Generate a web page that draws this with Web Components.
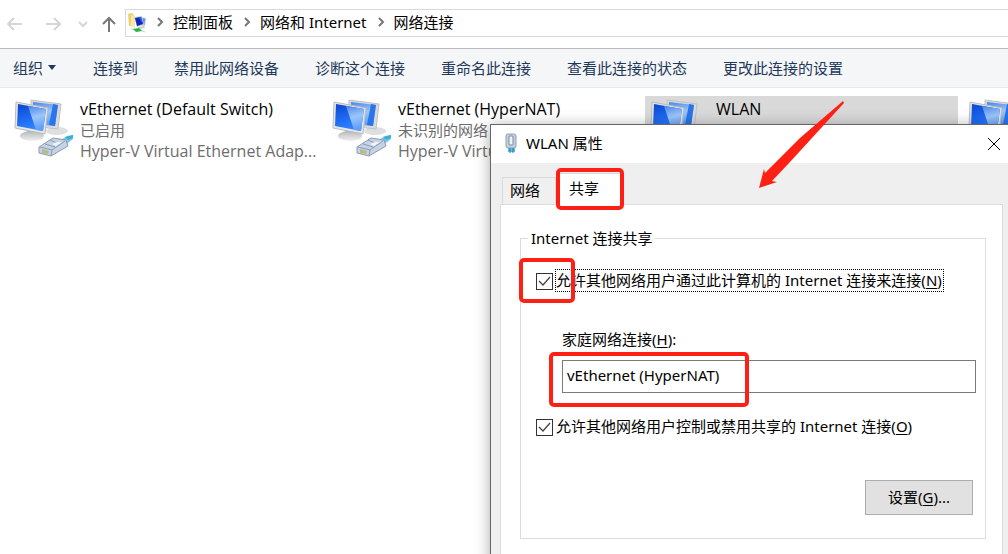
<!DOCTYPE html>
<html lang="zh-CN">
<head>
<meta charset="utf-8">
<title>网络连接</title>
<style>
html, body { margin: 0; height: 100%; }
body { background: #fff; color: #000; font: 15px/21px "Noto Sans", "Noto Sans CJK SC", sans-serif; overflow: hidden; }
</style>
</head>
<body>
<network-window></network-window>
<script>
function define(name, html) {
  const template = document.createElement('template');
  template.innerHTML = html;
  customElements.define(name, class extends HTMLElement {
    constructor() {
      super();
      this.attachShadow({ mode: 'open' }).append(template.content.cloneNode(true));
    }
  });
}

define('crumb-bar', `
<style>
:host { display: flex; align-items: center; height: 48px; border-bottom: 1px solid #b9bcbf; box-sizing: content-box; }
.nav { display: flex; width: 125px; flex: none; }
.nav button { border: 0; padding: 0; background: none; display: block; height: 28px; }
.nav svg { display: block; }
.address { flex: 1; min-width: 0; box-sizing: border-box; height: 28px; margin-bottom: 2px; border: 1px solid #d9d9d9; border-right: 0; display: flex; align-items: center; white-space: nowrap; }
a { color: #000; text-decoration: none; line-height: 20px; padding-bottom: 2px; }
.sep { flex: none; width: 27px; height: 26px; }
</style>
<div class="nav">
<button aria-label="后退"><svg width="44" height="28" fill="none" stroke="#d5d5d5" stroke-width="2"><path d="M22 14H8M14 8l-6 6 6 6"/></svg></button>
<button aria-label="前进"><svg width="30" height="28" fill="none" stroke="#d5d5d5" stroke-width="2"><path d="M2 14h14M10 8l6 6-6 6"/></svg></button>
<button aria-label="最近位置"><svg width="24" height="28" fill="none" stroke="#d5d5d5" stroke-width="2"><path d="M5 12l4 4 4-4"/></svg></button>
<button aria-label="上移"><svg width="26" height="28" fill="none" stroke="#777" stroke-width="2"><path d="M11 22V8M5 14l6-6 6 6"/></svg></button>
</div>
<nav class="address">
<svg width="20" height="22" viewBox="0 0 20 22"><path d="M2 2l4-1 2 2v10l-5 1z" fill="#edcf74"/><path d="M5 3l4 1v12l-4-2z" fill="#fae7a4"/><path d="M14 5l6 1-1 8-5-1z" fill="#b9c6d8"/><path d="M15 6l4 1-1 6-3-1z" fill="#5b86e6"/><path d="M8 5l8-1 2 9-7 2z" fill="#c5cdd6"/><path d="M9 6l6-1 2 7-6 2z" fill="#1024bf"/><path d="M12 5l3 0 2 7z" fill="#3157e8"/><path d="M12 15l6-1 1 2-6 1z" fill="#c9cdd1"/><path d="M5 17l9 1 5 2" stroke="#bcc8c4" fill="none"/><path d="M7 17l6-1 3 3-6 1z" fill="#25b34a"/></svg>
<svg class="sep" fill="none" stroke="#777" stroke-width="2"><path d="M12 8l4 4-4 4"/></svg>
<a href="#">控制面板</a>
<svg class="sep" fill="none" stroke="#777" stroke-width="2"><path d="M12 8l4 4-4 4"/></svg>
<a href="#">网络和 Internet</a>
<svg class="sep" fill="none" stroke="#777" stroke-width="2"><path d="M12 8l4 4-4 4"/></svg>
<a href="#">网络连接</a>
</nav>`);

define('command-bar', `
<style>
:host { display: flex; align-items: center; gap: 36px; height: 38px; padding-left: 13px; background: #f5f6f7; border-bottom: 1px solid #e6e7e9; white-space: nowrap; }
button { flex: none; border: 0; padding: 0; background: none; font: inherit; color: #1e395b; display: flex; align-items: center; gap: 4px; }
</style>
<button>组织<svg width="10" height="6"><path d="M1 0h8L5 5z" fill="#1e395b"/></svg></button>
<button>连接到</button>
<button>禁用此网络设备</button>
<button>诊断这个连接</button>
<button>重命名此连接</button>
<button>查看此连接的状态</button>
<button>更改此连接的设置</button>`);

define('adapter-icon', `
<style>:host { display: block; flex: none; width: 62px; height: 62px; } svg { display: block; }</style>
<svg width="62" height="62" viewBox="0 0 62 62">
<defs>
<linearGradient id="a" x1="0" y1="0" x2=".4" y2="1"><stop offset="0" stop-color="#0b46cf"/><stop offset=".6" stop-color="#1f6cf5"/><stop offset="1" stop-color="#2f86ff"/></linearGradient>
<linearGradient id="b" x1="0" y1="0" x2=".2" y2="1"><stop offset="0" stop-color="#4a86ea"/><stop offset=".5" stop-color="#9cc6fb"/><stop offset="1" stop-color="#5e9ff8"/></linearGradient>
<linearGradient id="c" x1="0" y1="0" x2="0" y2="1"><stop offset="0" stop-color="#b4b7ba"/><stop offset="1" stop-color="#f0f0f0"/></linearGradient>
</defs>
<ellipse cx="43" cy="32" rx="11" ry="4" fill="#dedfe0"/>
<path d="M17 1l30 4-3 25-27-3z" fill="#d9dadb" stroke="#bfc1c3"/>
<path d="M19 3l25 3-3 21-22-2z" fill="url(#b)"/>
<path d="M39 5l5 1-3 21-6-1z" fill="#2b74ea"/>
<path d="M14 31l9 1 1 6-12-1z" fill="#a9adb1"/>
<ellipse cx="18" cy="37" rx="12" ry="5" fill="url(#c)"/>
<path d="M2 3l32 6-3 26L1 29z" fill="#e6e6e7" stroke="#b9bbbe"/>
<path d="M4 5l28 5-3 22L3 27z" fill="url(#a)"/>
<path d="M14 7l18 3-3 22-7-1z" fill="url(#b)"/>
<path d="M45 42l8-5 6-1v4l-9 7z" fill="#7fc8e2"/>
<path d="M51 38l8-2v3l-5 2z" fill="#34b0dc"/>
<path d="M25 48l14-9 13 2 2 6-17 10-12-3z" fill="#c6d3e5" stroke="#8c9bb4"/>
<path d="M26 48l12 3 13-9M38 51l-1 6M31 45l10 3M36 41l9 4" fill="none" stroke="#8c9bb4"/>
<path d="M28 50l7 2-1 3-6-1z" fill="#b6bd7e"/>
<path d="M38 45l5-2 5 0-6 4z" fill="#f0f5fa"/>
</svg>`);

define('adapter-item', `
<style>
:host { display: flex; box-sizing: border-box; height: 70px; padding: 3px 5px; gap: 4px; white-space: nowrap; overflow: hidden; }
:host([selected]) { background: #d9d9d9; }
.text { color: #6d6d6d; font: 16px/21px "Open Sans", "Noto Sans CJK SC", sans-serif; }
.name { color: #000; }
.state { font-size: 15px; }
</style>
<adapter-icon></adapter-icon>
<div class="text"><div class="name"><slot name="name"></slot></div><div class="state"><slot name="state"></slot></div><slot></slot></div>`);

define('group-box', `
<style>
:host { display: block; }
fieldset { margin: 0; min-width: 0; padding: 0 9px 23px 15px; border: 1px solid #dcdcdc; }
legend { margin-left: -8px; padding: 0 3px; line-height: 20px; }
</style>
<fieldset><legend><slot name="legend"></slot></legend><slot></slot></fieldset>`);

define('check-option', `
<style>
:host { display: block; }
label { display: flex; gap: 2px; white-space: nowrap; align-items: flex-start; }
input { appearance: none; flex: none; box-sizing: border-box; width: 17px; height: 17px; margin: 4px 0 0; border: 1px solid #333; background: #fff; }
input:checked { background: #fff url("data:image/svg+xml,%3Csvg xmlns='http://www.w3.org/2000/svg' viewBox='0 0 13 13'%3E%3Cpath d='M1 6l4 4 7-8' fill='none' stroke='%23444' stroke-width='1.3'/%3E%3C/svg%3E") center / 13px 13px no-repeat; }
span { line-height: 21px; border: 1px solid transparent; }
:host([focused]) span { border: 1px dotted #000; padding-right: 1px; }
</style>
<label><input type="checkbox" checked><span><slot></slot></span></label>`);

define('red-marks', `
<style>:host { position: absolute; left: 0; top: 0; z-index: 2; pointer-events: none; } svg { display: block; overflow: visible; }</style>
<svg width="1" height="1" fill="none" stroke="#ff2015" stroke-width="4">
<rect x="67" y="45" width="64" height="38" rx="3"/>
<rect x="30" y="135" width="52" height="41" rx="3"/>
<rect x="60" y="229" width="196" height="51" rx="3"/>
<path d="M268 63L273 44 274 48 309 13 352-24 353-22 299 37 281 56 286 57z" fill="#ff2015" stroke="none"/>
</svg>`);

define('sharing-dialog', `
<style>
:host { position: absolute; left: 490px; top: 124px; right: -6px; bottom: -10px; box-sizing: border-box; display: flex; flex-direction: column; background: #efefef; border: 1px solid #666; box-shadow: 0 2px 14px rgba(0,0,0,.35); }
header { display: flex; align-items: center; height: 38px; padding: 0 11px 0 12px; background: #fff; flex: none; }
header svg { flex: none; }
h1 { flex: 1; margin: 0 0 0 7px; font: inherit; padding-bottom: 2px; }
button { font: inherit; color: #000; }
.close { border: 0; padding: 0; background: none; width: 16px; height: 16px; }
.close svg { display: block; }
.tabs { display: flex; align-items: flex-end; height: 41px; padding-left: 11px; flex: none; }
.tabs button { box-sizing: border-box; border: 1px solid #d9d9d9; border-bottom: 0; background: #f0f0f0; padding: 0 8px 1px 0; width: 54px; height: 27px; }
.tabs .on { background: #fff; width: 66px; height: 32px; padding: 0 10px 3px 0; margin-bottom: -1px; position: relative; }
.panel { flex: 1; margin: 0 10px 0 9px; border: 1px solid #dcdcdc; background: #fff; padding: 23px 16px 0 19px; }
.first { margin-top: 21px; }
.home { margin: 37px 0 22px 26px; display: block; }
.home label { display: block; line-height: 20px; }
input { box-sizing: border-box; display: block; width: 100%; height: 33px; margin-top: 11px; border: 1px solid #7a7a7a; padding: 0 4px 3px; font: inherit; color: #000; background: #fff; outline: 0; }
.row { display: flex; justify-content: flex-end; margin-top: 42px; padding-right: 3px; }
.row button { box-sizing: border-box; width: 108px; height: 35px; border: 1px solid #adadad; background: #e1e1e1; }
u { text-underline-offset: 2px; }
</style>
<header>
<svg width="16" height="22" viewBox="0 0 16 22"><rect x="3" y="1" width="10" height="14" rx="2" fill="#c3cedb" stroke="#93a1b4"/><rect x="6" y="3" width="4" height="9" rx="1" fill="#eef3f8" stroke="#7e8da3"/><path d="M5 15h7v4H5z" fill="#5cc0e0"/><path d="M7 15v5M10 15v5" stroke="#1c7aa5"/></svg>
<h1>WLAN 属性</h1>
<button class="close" aria-label="关闭"><svg width="16" height="16" stroke="#000" fill="none"><path d="M2 2l12 12M14 2L2 14"/></svg></button>
</header>
<div class="tabs" role="tablist"><button role="tab">网络</button><button role="tab" class="on" aria-selected="true">共享</button></div>
<section class="panel">
<group-box>
<span slot="legend">Internet 连接共享</span>
<check-option class="first" focused>允许其他网络用户通过此计算机的 Internet 连接来连接(<u>N</u>)</check-option>
<div class="home"><label for="home">家庭网络连接(<u>H</u>):</label><input id="home" value="vEthernet (HyperNAT)"></div>
<check-option>允许其他网络用户控制或禁用共享的 Internet 连接(<u>O</u>)</check-option>
<div class="row"><button>设置(<u>G</u>)...</button></div>
</group-box>
</section>
<red-marks></red-marks>`);

define('network-window', `
<style>
:host { display: block; position: relative; height: 100vh; overflow: hidden; }
main { display: grid; grid-template-columns: repeat(4, 313px); gap: 5px; padding: 8px 0 0 9px; }
</style>
<crumb-bar></crumb-bar>
<command-bar></command-bar>
<main>
<adapter-item><span slot="name">vEthernet (Default Switch)</span><span slot="state">已启用</span><div>Hyper-V Virtual Ethernet Adap...</div></adapter-item>
<adapter-item><span slot="name">vEthernet (HyperNAT)</span><span slot="state">未识别的网络</span><div>Hyper-V Virtual</div></adapter-item>
<adapter-item selected><span slot="name">WLAN</span></adapter-item>
<adapter-item></adapter-item>
</main>
<sharing-dialog></sharing-dialog>`);
</script>
</body>
</html>
